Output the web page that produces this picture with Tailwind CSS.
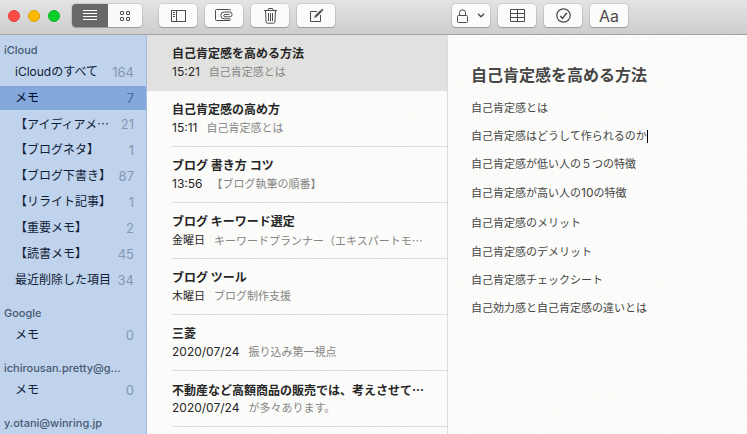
<!DOCTYPE html>
<html lang="ja">
<head>
  <meta charset="UTF-8">
  <meta name="viewport" content="width=device-width, initial-scale=1">
  <title>メモ</title>
  <script src="https://cdn.jsdelivr.net/npm/@tailwindcss/browser@4"></script>
  <style>
    body {
      font-family: "Inter", "Noto Sans CJK JP", sans-serif;
    }
    .toolbar-button {
      box-shadow: 0 0 0 1px rgba(0, 0, 0, 0.08), 0 1px 1px rgba(0, 0, 0, 0.2);
    }
    /* Paper grain */
    .paper {
      background-color: #fcfcfa;
      background-image: url("data:image/svg+xml,%3Csvg xmlns='http://www.w3.org/2000/svg' width='200' height='200'%3E%3Cfilter id='n'%3E%3CfeTurbulence type='fractalNoise' baseFrequency='.2 .35' numOctaves='2' stitchTiles='stitch'/%3E%3CfeColorMatrix values='0 0 0 0 .4 0 0 0 0 .4 0 0 0 0 .38 .07 0 0 0 -.025'/%3E%3C/filter%3E%3Crect width='200' height='200' filter='url(%23n)'/%3E%3C/svg%3E");
    }
  </style>
</head>
<body class="h-screen flex flex-col overflow-hidden text-xs text-[#262626]">

  <!-- Toolbar -->
  <header class="h-[35px] shrink-0 flex items-start pt-1 pl-2 bg-linear-to-b from-[#e4e4e4] to-[#cdcdcd] border-b border-[#a3a3a3] text-[#4d4d4d]">
    <div class="flex gap-2 pt-1.5">
      <button aria-label="閉じる" class="size-3 rounded-full bg-[#fe4b46] border border-[#e2403b]"></button>
      <button aria-label="しまう" class="size-3 rounded-full bg-[#ffb900] border border-[#e2a100]"></button>
      <button aria-label="拡大" class="size-3 rounded-full bg-[#0bcf29] border border-[#0fb224]"></button>
    </div>

    <div class="toolbar-button ml-3 flex rounded-[4px] overflow-hidden">
      <button aria-label="リスト表示" class="w-9 h-[23px] flex items-center justify-center bg-[#686868] text-white">
        <svg width="14" height="11" stroke="currentColor"><path d="M0 .5h14M0 3.5h14M0 6.5h14M0 9.5h14"/></svg>
      </button>
      <button aria-label="ギャラリー表示" class="w-[34px] h-[23px] flex items-center justify-center bg-[#fafafa]">
        <svg width="10" height="10" fill="none" stroke="currentColor"><rect x=".5" y=".5" width="3" height="3" rx=".5"/><rect x="6.5" y=".5" width="3" height="3" rx=".5"/><rect x=".5" y="6.5" width="3" height="3" rx=".5"/><rect x="6.5" y="6.5" width="3" height="3" rx=".5"/></svg>
      </button>
    </div>

    <div class="ml-[17px] flex gap-2">
      <button aria-label="フォルダを表示" class="toolbar-button w-[38px] h-[23px] rounded-[4px] bg-[#fbfbfb] flex items-center justify-center">
        <svg width="15" height="12" fill="none" stroke="currentColor"><rect x=".5" y=".5" width="14" height="11"/><path d="M5.5 .5v11M2 2.5h2M2 4.5h2M2 6.5h2"/></svg>
      </button>
      <button aria-label="添付ファイル" class="toolbar-button w-[38px] h-[23px] rounded-[4px] bg-[#fbfbfb] flex items-center justify-center">
        <svg width="18" height="13" fill="none" stroke="currentColor"><path d="M15.500 1.500q0-1-1-1h-13q-1 0-1 1v9q0 1 1 1h13q1 0 1-1"/><path d="M15 9.800H9.200a3.400 3.400 0 0 1 0-6.800h5.500a2.400 2.400 0 0 1 0 4.800H10a1.200 1.200 0 0 1 0-2.400h4.500"/></svg>
      </button>
      <button aria-label="削除" class="toolbar-button w-[38px] h-[23px] rounded-[4px] bg-[#fbfbfb] flex items-center justify-center">
        <svg width="13" height="16" fill="none" stroke="currentColor"><path d="M0 2.500h13M4 2.500v-1q0-1 1-1h3q1 0 1 1v1M1.500 2.500l.6 11.500q.1 1.200 1.200 1.200h6.400q1.100 0 1.200-1.200l.6-11.500M4.500 5v8M6.500 5v8M8.500 5v8"/></svg>
      </button>
      <button aria-label="新規メモ" class="toolbar-button w-[38px] h-[23px] rounded-[4px] bg-[#fbfbfb] flex items-center justify-center">
        <svg width="15" height="15" fill="none" stroke="currentColor"><path d="M8 3.500H1.500v10h10V7"/><path d="M5.500 9.500l1-2.200 5-5 1.300 1.300-5 5z" fill="currentColor" stroke-width=".6"/><path d="M12.500 1.300l1.400 1.400" stroke-width="1.800"/></svg>
      </button>
    </div>

    <div class="ml-[117px] flex gap-2">
      <button aria-label="ロック" class="toolbar-button w-[38px] h-[23px] rounded-[4px] bg-[#fbfbfb] flex items-center justify-center gap-2">
        <svg width="12" height="14" fill="none" stroke="currentColor"><rect x=".5" y="6.500" width="10" height="7" rx="1"/><path d="M2.500 6.500V3.800a3 3 0 0 1 6 0v2.700"/></svg>
        <svg width="8" height="5" fill="none" stroke="currentColor" stroke-width="1.400"><path d="M1 .8l3 3 3-3"/></svg>
      </button>
      <button aria-label="表" class="toolbar-button w-[38px] h-[23px] rounded-[4px] bg-[#fbfbfb] flex items-center justify-center">
        <svg width="15" height="13" fill="none" stroke="currentColor"><path d="M.5.5h14v12H.5zM.5 4.500h14M.5 8.500h14M7.500.5v12"/></svg>
      </button>
      <button aria-label="チェックリスト" class="toolbar-button w-[38px] h-[23px] rounded-[4px] bg-[#fbfbfb] flex items-center justify-center">
        <svg width="15" height="15" fill="none" stroke="currentColor" stroke-width="1.200"><circle cx="7.500" cy="7.500" r="6.700"/><path d="M4.300 8l2.200 2.400 4.300-5.600" stroke-width="1.500"/></svg>
      </button>
      <button aria-label="フォーマット" class="toolbar-button w-[38px] h-[23px] rounded-[4px] bg-[#fbfbfb] text-base leading-none">Aa</button>
    </div>
  </header>

  <div class="flex flex-1 min-h-0">

    <!-- Folders -->
    <nav class="w-[147px] shrink-0 pt-[5px] bg-[#bfd3ec] border-r border-[#a3bce0] overflow-hidden text-[#0f2036]">
      <section>
        <h2 class="h-5 px-1 leading-5 text-[11px] font-medium text-[#475a73]">iCloud</h2>
        <ul class="flex flex-col gap-0.5 leading-6">
          <li><a href="#" class="flex justify-between pl-[15px] pr-3"><span>iCloudのすべて</span><span class="text-[13px] text-[#8498b3]">164</span></a></li>
          <li><a href="#" class="flex justify-between pl-[15px] pr-3 bg-[#84a7dc] text-[#000a2a]"><span>メモ</span><span class="text-[13px] text-[#4c6a9c]">7</span></a></li>
          <li><a href="#" class="flex justify-between pl-[15px] pr-3"><span class="font-['Noto_Sans_CJK_JP']">【アイディアメ…</span><span class="text-[13px] text-[#8498b3]">21</span></a></li>
          <li><a href="#" class="flex justify-between pl-[15px] pr-3"><span>【ブログネタ】</span><span class="text-[13px] text-[#8498b3]">1</span></a></li>
          <li><a href="#" class="flex justify-between pl-[15px] pr-3"><span>【ブログ下書き】</span><span class="text-[13px] text-[#8498b3]">87</span></a></li>
          <li><a href="#" class="flex justify-between pl-[15px] pr-3"><span>【リライト記事】</span><span class="text-[13px] text-[#8498b3]">1</span></a></li>
          <li><a href="#" class="flex justify-between pl-[15px] pr-3"><span>【重要メモ】</span><span class="text-[13px] text-[#8498b3]">2</span></a></li>
          <li><a href="#" class="flex justify-between pl-[15px] pr-3"><span>【読書メモ】</span><span class="text-[13px] text-[#8498b3]">45</span></a></li>
          <li><a href="#" class="flex justify-between pl-[15px] pr-3"><span>最近削除した項目</span><span class="text-[13px] text-[#8498b3]">34</span></a></li>
        </ul>
      </section>
      <section class="mt-[11px]">
        <h2 class="h-5 px-1 leading-5 text-[11px] font-medium text-[#475a73]">Google</h2>
        <a href="#" class="flex justify-between pl-[15px] pr-3 leading-6"><span>メモ</span><span class="text-[13px] text-[#8498b3]">0</span></a>
      </section>
      <section class="mt-[11px]">
        <h2 class="h-5 px-1 leading-5 text-[11px] font-medium text-[#475a73] whitespace-nowrap">ichirousan.pretty@g...</h2>
        <a href="#" class="flex justify-between pl-[15px] pr-3 leading-6"><span>メモ</span><span class="text-[13px] text-[#8498b3]">0</span></a>
      </section>
      <section class="mt-[11px]">
        <h2 class="h-5 px-1 leading-5 text-[11px] font-medium text-[#475a73]">y.otani@winring.jp</h2>
      </section>
    </nav>

    <!-- Note list -->
    <ul class="paper w-[301px] shrink-0 border-r border-[#dcdcda] overflow-hidden leading-[18px] whitespace-nowrap">
      <li class="h-14 pl-[25px] bg-[#dededc]/90">
        <a href="#" class="block pt-[10px]">
          <h3 class="font-bold">自己肯定感を高める方法</h3>
          <p class="flex gap-[9px]"><time>15:21</time><span class="text-[11px] text-[#858585]">自己肯定感とは</span></p>
        </a>
      </li>
      <li class="h-14 pl-[25px]">
        <a href="#" class="block h-full pt-[10px] border-b border-[#dcdcda]">
          <h3 class="font-bold">自己肯定感の高め方</h3>
          <p class="flex gap-[9px]"><time>15:11</time><span class="text-[11px] text-[#858585]">自己肯定感とは</span></p>
        </a>
      </li>
      <li class="h-14 pl-[25px]">
        <a href="#" class="block h-full pt-[10px] border-b border-[#dcdcda]">
          <h3 class="font-bold">ブログ 書き方 コツ</h3>
          <p class="flex gap-[9px]"><time>13:56</time><span class="text-[11px] text-[#858585]">【ブログ執筆の順番】</span></p>
        </a>
      </li>
      <li class="h-14 pl-[25px]">
        <a href="#" class="block h-full pt-[10px] border-b border-[#dcdcda]">
          <h3 class="font-bold">ブログ キーワード選定</h3>
          <p class="flex gap-[9px]"><time class="text-[11px]">金曜日</time><span class="font-['Noto_Sans_CJK_JP'] text-[11px] text-[#858585]">キーワードプランナー（エキスパートモ…</span></p>
        </a>
      </li>
      <li class="h-14 pl-[25px]">
        <a href="#" class="block h-full pt-[10px] border-b border-[#dcdcda]">
          <h3 class="font-bold">ブログ ツール</h3>
          <p class="flex gap-[9px]"><time class="text-[11px]">木曜日</time><span class="text-[11px] text-[#858585]">ブログ制作支援</span></p>
        </a>
      </li>
      <li class="h-14 pl-[25px]">
        <a href="#" class="block h-full pt-[10px] border-b border-[#dcdcda]">
          <h3 class="font-bold">三菱</h3>
          <p class="flex gap-[9px]"><time>2020/07/24</time><span class="text-[11px] text-[#858585]">振り込み第一視点</span></p>
        </a>
      </li>
      <li class="h-14 pl-[25px]">
        <a href="#" class="block h-full pt-[10px] border-b border-[#dcdcda]">
          <h3 class="font-['Noto_Sans_CJK_JP'] font-bold">不動産など高額商品の販売では、考えさせて…</h3>
          <p class="flex gap-[9px]"><time>2020/07/24</time><span class="text-[11px] text-[#858585]">が多々あります。</span></p>
        </a>
      </li>
    </ul>

    <!-- Note -->
    <main class="paper flex-1 min-w-0 pt-7 pl-[23px] text-[#454545]">
      <h1 class="text-base leading-6 font-bold">自己肯定感を高める方法</h1>
      <div class="pt-[7px] text-[11px] leading-7">
        <p>自己肯定感とは</p>
        <p class="flex items-center">自己肯定感はどうして作られるのか<span class="w-px h-[13px] bg-black"></span></p>
        <p>自己肯定感が低い人の５つの特徴</p>
        <p class="leading-[30px]">自己肯定感が高い人の<span class="text-xs leading-none">10</span>の特徴</p>
        <p class="leading-[30px]">自己肯定感のメリット</p>
        <p>自己肯定感のデメリット</p>
        <p>自己肯定感チェックシート</p>
        <p>自己効力感と自己肯定感の違いとは</p>
      </div>
    </main>
  </div>

</body>
</html>
